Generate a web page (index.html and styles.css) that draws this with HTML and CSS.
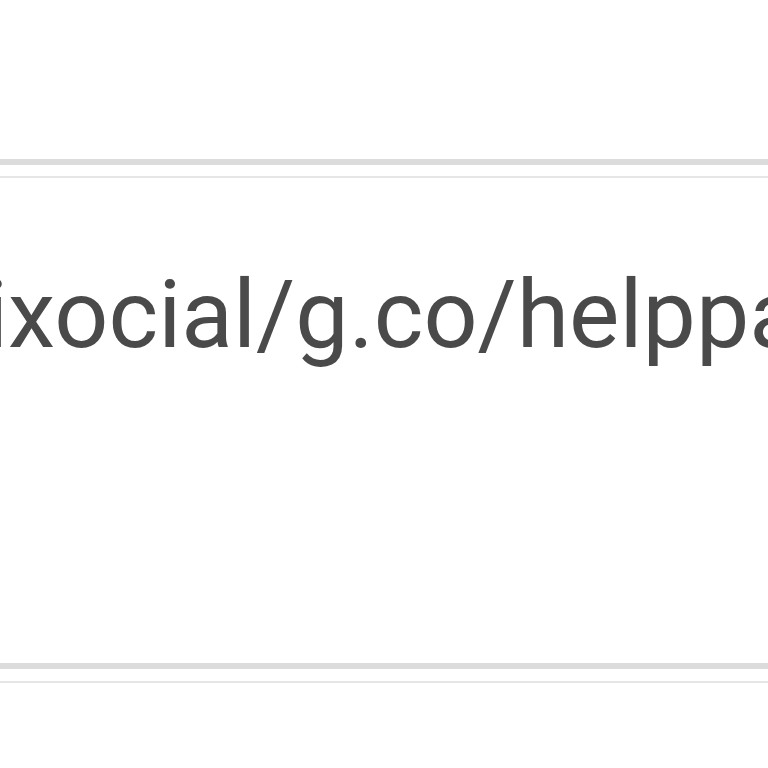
FILE: index.html
```html
<!DOCTYPE html>
<html>
<head>
<meta charset="utf-8">
<link rel="stylesheet" href="styles.css">
</head>
<body>
<div class="page">
  <div class="top-space"></div>
  <div class="rule-thick"></div>
  <div class="rule-thin-top"></div>
  <div class="content">
    <div class="url">ixocial/g.co/helppage</div>
  </div>
  <div class="rule-thick"></div>
  <div class="rule-thin-bottom"></div>
</div>
</body>
</html>
```

FILE: styles.css
```css
html, body {
  margin: 0;
  padding: 0;
  background: #ffffff;
  overflow: hidden;
}
.page {
  width: 768px;
  height: 768px;
  display: flex;
  flex-direction: column;
  overflow: hidden;
}
.top-space {
  height: 159px;
  flex: none;
}
.rule-thick {
  height: 6px;
  background: #dcdcdc;
  flex: none;
}
.rule-thin-top {
  height: 2px;
  margin-top: 11px;
  background: #e6e6e6;
  flex: none;
}
.rule-thin-bottom {
  height: 2px;
  margin-top: 12px;
  background: #e6e6e6;
  flex: none;
}
.content {
  height: 485px;
  flex: none;
  overflow: hidden;
}
.url {
  font-family: Roboto, "Liberation Sans", sans-serif;
  font-size: 95px;
  color: #4a4a4a;
  white-space: nowrap;
  margin-left: -15px;
  margin-top: 82px;
  line-height: 110px;
}
```
